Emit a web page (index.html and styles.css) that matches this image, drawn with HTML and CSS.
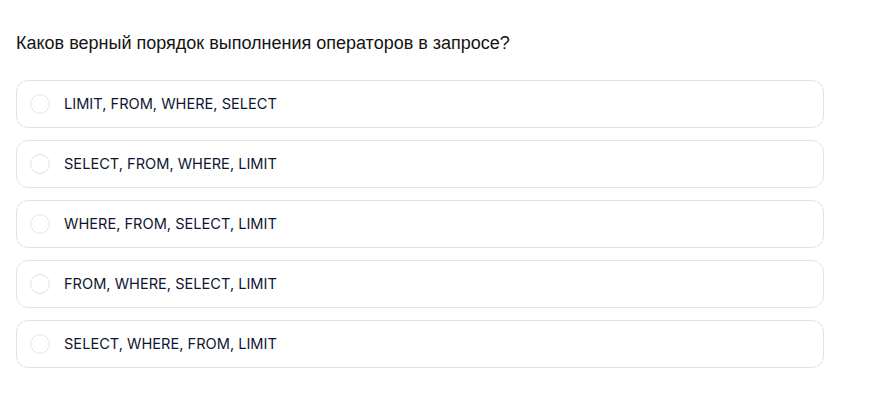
FILE: index.html
```html
<!DOCTYPE html>
<html lang="ru">
<head>
<meta charset="utf-8">
<link rel="stylesheet" href="styles.css">
</head>
<body>
<div class="quiz">
  <p class="question">Каков верный порядок выполнения операторов в запросе?</p>
  <div class="options">
    <label class="option"><span class="radio"></span><span class="text">LIMIT, FROM, WHERE, SELECT</span></label>
    <label class="option"><span class="radio"></span><span class="text">SELECT, FROM, WHERE, LIMIT</span></label>
    <label class="option"><span class="radio"></span><span class="text">WHERE, FROM, SELECT, LIMIT</span></label>
    <label class="option"><span class="radio"></span><span class="text">FROM, WHERE, SELECT, LIMIT</span></label>
    <label class="option"><span class="radio"></span><span class="text">SELECT, WHERE, FROM, LIMIT</span></label>
  </div>
</div>
</body>
</html>
```
FILE: styles.css
```css
html, body {
  margin: 0;
  padding: 0;
  background: #ffffff;
}
body {
  font-family: Inter, "Noto Sans", sans-serif;
  color: #0e1633;
}
.quiz {
  padding: 31px 50px 0 16px;
}
.question {
  margin: 0 0 25px 0;
  font-family: "Liberation Sans", Arial, sans-serif;
  font-size: 18px;
  line-height: 24px;
  color: #141414;
}
.options {
  display: flex;
  flex-direction: column;
  gap: 12px;
}
.option {
  display: flex;
  align-items: center;
  height: 48px;
  box-sizing: border-box;
  border: 1px solid #dfe3ec;
  border-radius: 12px;
  padding: 0 13px;
  gap: 14px;
}
.radio {
  width: 20px;
  height: 20px;
  box-sizing: border-box;
  border: 1px solid #dde2ea;
  border-radius: 50%;
  flex: none;
}
.text {
  font-size: 14.6px;
  line-height: 20px;
  color: #0e1633;
}
```
